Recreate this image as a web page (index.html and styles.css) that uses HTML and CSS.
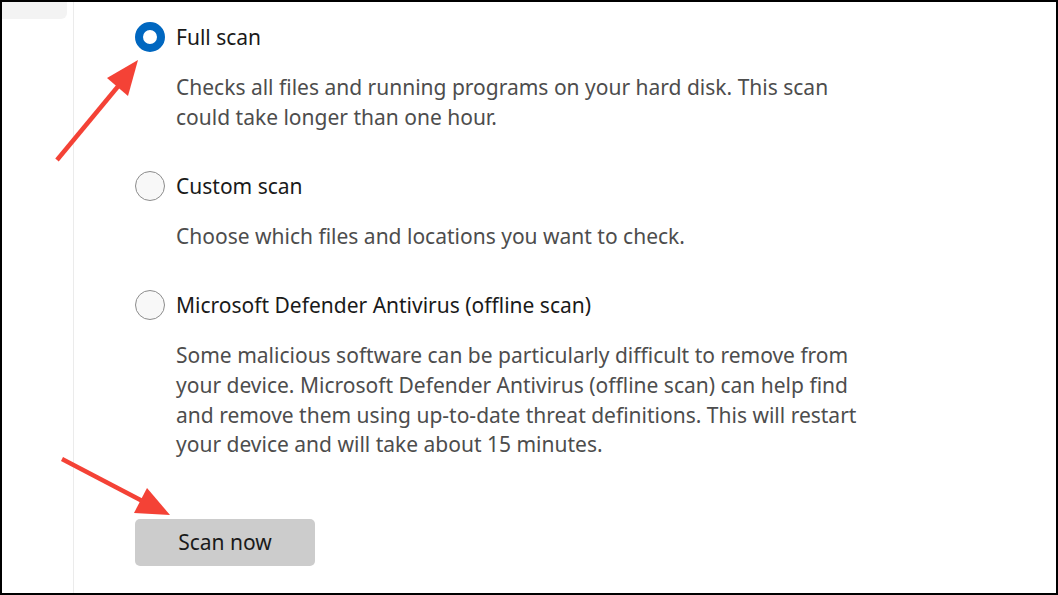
FILE: index.html
```html
<!DOCTYPE html>
<html>
<head>
<meta charset="utf-8">
<link rel="stylesheet" href="styles.css">
</head>
<body>
<div class="frame">
  <aside class="sidebar"><div class="tab"></div></aside>
  <main class="content">
    <div class="option">
      <label class="row"><span class="radio checked"></span><span class="title">Full scan</span></label>
      <p class="desc">Checks all files and running programs on your hard disk. This scan could take longer than one hour.</p>
    </div>
    <div class="option">
      <label class="row"><span class="radio"></span><span class="title">Custom scan</span></label>
      <p class="desc">Choose which files and locations you want to check.</p>
    </div>
    <div class="option">
      <label class="row"><span class="radio"></span><span class="title">Microsoft Defender Antivirus (offline scan)</span></label>
      <p class="desc">Some malicious software can be particularly difficult to remove from your device. Microsoft Defender Antivirus (offline scan) can help find and remove them using up-to-date threat definitions. This will restart your device and will take about 15 minutes.</p>
    </div>
    <button class="scan-btn">Scan now</button>
  </main>
  <svg class="annot" width="1058" height="595" viewBox="0 0 1058 595">
    <line x1="57" y1="160" x2="120" y2="84" stroke="#f44236" stroke-width="4.5"/>
    <polygon points="138,60 107,78 128,96" fill="#f44236"/>
    <line x1="62" y1="459" x2="150" y2="505" stroke="#f44236" stroke-width="4.5"/>
    <polygon points="170,515 134,513 147,488" fill="#f44236"/>
  </svg>
</div>
</body>
</html>
```
FILE: styles.css
```css
* { box-sizing: border-box; }
html, body { margin: 0; padding: 0; background: #fff; }
.frame {
  position: relative;
  width: 1058px;
  height: 595px;
  border: 2px solid #000;
  display: flex;
  overflow: hidden;
  font-family: "Noto Sans", "Open Sans", sans-serif;
}
.sidebar {
  width: 72px;
  flex: none;
  border-right: 1px solid #ebebeb;
}
.tab {
  width: 65px;
  height: 17px;
  background: #f3f3f3;
  border-bottom-right-radius: 6px;
}
.content {
  padding: 20px 0 0 61px;
  display: flex;
  flex-direction: column;
  align-items: flex-start;
}
.option { margin-bottom: 39px; }
.option + .option { margin-bottom: 38px; }
.row {
  display: flex;
  align-items: center;
  gap: 11px;
  height: 30px;
}
.radio {
  width: 30px;
  height: 30px;
  border-radius: 50%;
  border: 1.5px solid #8c8c8c;
  background: #f8f8f8;
  flex: none;
}
.radio.checked {
  border: 8px solid #0067c0;
  background: #fff;
}
.title {
  font-size: 21px;
  color: #1a1a1a;
}
.desc {
  margin: 21px 0 0 41px;
  width: 700px;
  font-size: 21px;
  line-height: 29.7px;
  color: #4d4d4d;
}
.scan-btn {
  margin-top: 21px;
  width: 180px;
  height: 47px;
  border: none;
  border-radius: 5px;
  background: #cccccc;
  font-family: inherit;
  font-size: 21px;
  color: #1a1a1a;
}
.annot {
  position: absolute;
  left: -2px;
  top: -2px;
  pointer-events: none;
}
```
